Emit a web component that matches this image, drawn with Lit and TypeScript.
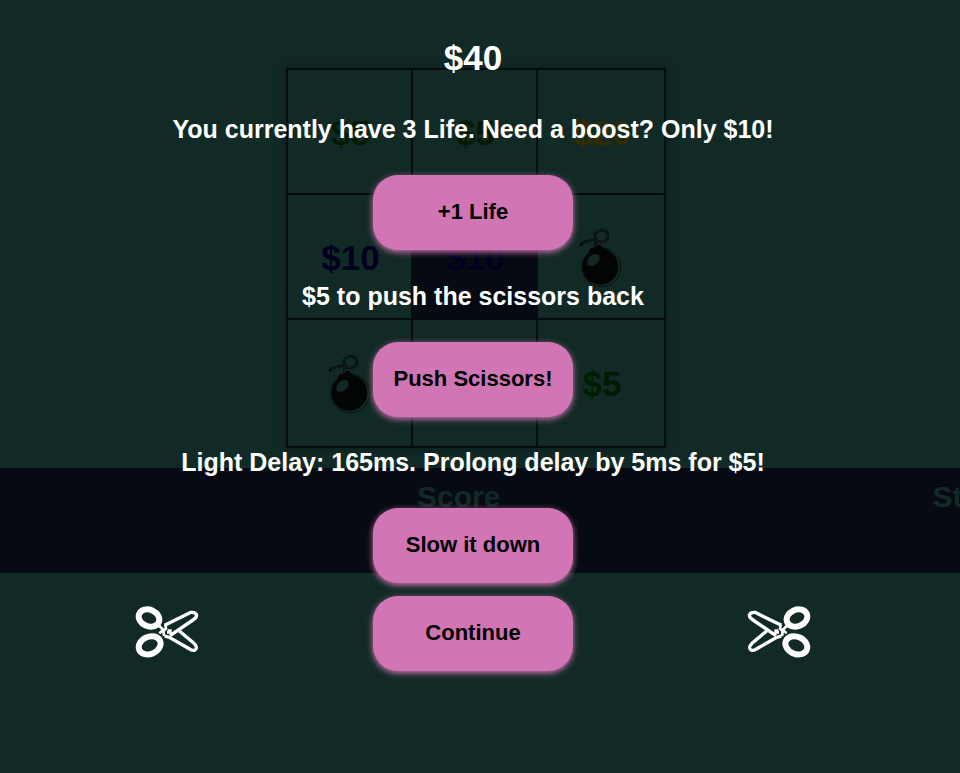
import { LitElement, html, css, svg } from "lit";
import { customElement, property } from "lit/decorators.js";

type Cell = { kind: string; label?: string; active?: boolean };

const CELLS: Cell[] = [
  { kind: "green", label: "$5" },
  { kind: "green", label: "$5" },
  { kind: "gold", label: "$20" },
  { kind: "blue", label: "$10" },
  { kind: "blue", label: "$10", active: true },
  { kind: "bomb" },
  { kind: "bomb" },
  { kind: "green", label: "$5" },
  { kind: "green", label: "$5" },
];

@customElement("bomb-icon")
class BombIcon extends LitElement {
  static styles = css`
    :host { display: block; width: 60px; height: 60px; }
    .icon { display: block; width: 60px; height: 60px; overflow: visible; }
  `;
  render() {
    return html`<svg class="icon" viewBox="273 143 180 180" fill="none" aria-label="Bomb">
      ${svg`
        <circle cx="361" cy="261" r="58" stroke="#07100e" stroke-width="3" />
        <circle cx="358" cy="259" r="54" fill="#030504" />
        <path d="M323 212 L330 204 L345 200 L350 193 L360 194 L362 200 L370 204 L368 216 L340 222 Z" fill="#030504" />
        <ellipse cx="337" cy="239" rx="22" ry="15" transform="rotate(-42 337 239)" fill="#122824" stroke="#07100e" stroke-width="2" />
        <path d="M301 193 C302 182 318 184 330 180 C344 174 352 189 366 184 C388 177 384 153 366 150 C350 148 335 163 344 172 C349 177 341 181 343 199" stroke="#07100e" stroke-width="8" />
        <path d="M301 190 C305 183 318 184 330 180 C344 174 352 189 366 184 C388 177 384 153 366 150 C350 148 335 163 344 172 C349 177 341 181 343 199" stroke="#11231f" stroke-width="3" stroke-dasharray="5 2" />
        <circle cx="300" cy="193" r="4" fill="#030504" />
      `}
    </svg>`;
  }
}

@customElement("scissors-icon")
class ScissorsIcon extends LitElement {
  @property({ type: Boolean, reflect: true }) flipped = false;
  static styles = css`
    :host { display: block; width: 64px; height: 64px; flex: none; }
    :host([flipped]) { transform: scaleX(-1); }
    .icon { display: block; width: 64px; height: 64px; }
  `;
  render() {
    return html`<svg class="icon" viewBox="45 36 192 192" fill="none" stroke="#fff" aria-label="Scissors">
      ${svg`
        <ellipse cx="87" cy="84" rx="32" ry="25" transform="rotate(24 87 84)" stroke-width="18" />
        <ellipse cx="89" cy="166" rx="34" ry="26" transform="rotate(-24 89 166)" stroke-width="18" />
        <path d="M134 106 L213 67 Q228 66 230 76 Q230 83 219 90 L150 137" stroke-width="10" stroke-linejoin="round" />
        <path d="M134 138 L148 142 L214 180 Q227 184 229 174 Q230 168 222 160 L178 123" stroke-width="10" stroke-linejoin="round" />
        <path d="M118 108 L130 120 L118 130 M136 104 L138 116 L130 124 L132 138" stroke-width="8" />
        <path d="M143 118 h12 v13 h-14 v-8 h2 Z" fill="#fff" stroke="none" />
      `}
    </svg>`;
  }
}

@customElement("app-root")
class AppRoot extends LitElement {
  static styles = css`
    :host {
      display: block;
      position: relative;
      min-height: 100vh;
      overflow: hidden;
      background: #122a26;
      font-family: "Liberation Sans", Arial, sans-serif;
      font-weight: bold;
    }
    .game { padding-top: 68px; }
    .board-row { display: flex; justify-content: center; padding-right: 8px; }
    .board {
      display: grid;
      grid-template-columns: 123px 123px 126px;
      grid-template-rows: 123px 123px 126px;
      gap: 2px;
      border: 2px solid #060a12;
      background: #060a12;
      box-shadow: 0 0 8px rgba(6, 10, 18, 0.5);
    }
    .cell {
      display: flex;
      align-items: center;
      justify-content: center;
      box-sizing: border-box;
      padding: 2px 0 0 2px;
      background: #122a26;
      font-size: 35px;
      line-height: 42px;
    }
    .active { background: #060a12; }
    .green { color: #011a02; }
    .gold { color: #332b00; }
    .blue { color: #00001f; }
    .stats {
      display: flex;
      gap: 432px;
      height: 105px;
      margin-top: 20px;
      padding: 12px 0 0 417px;
      box-sizing: border-box;
      overflow: hidden;
      white-space: nowrap;
      background: #060a12;
      color: #122a26;
      font-size: 30px;
      line-height: 34px;
    }
    .shop {
      position: absolute;
      inset: 0;
      display: flex;
      flex-direction: column;
      align-items: center;
      padding: 37px 14px 0 0;
      color: #fff;
      text-align: center;
    }
    .money { margin: 0 0 36px; font-size: 35px; line-height: 42px; }
    .offer { display: flex; flex-direction: column; align-items: center; margin-bottom: 32px; }
    .offer:nth-of-type(2) { margin-bottom: 31px; }
    .offer:last-of-type { margin-bottom: 13px; }
    .label { margin: 0 0 31px; font-size: 25px; line-height: 29px; }
    .button {
      width: 200px;
      height: 75px;
      flex: none;
      padding: 0 0 2px;
      border: 0;
      border-radius: 25px;
      background: #d175b5;
      box-shadow: 0 2px 6px #d175b5;
      color: #000;
      font: inherit;
      font-size: 22px;
      line-height: 26px;
      cursor: pointer;
    }
    .exit { display: flex; align-items: center; gap: 174px; }
  `;

  render() {
    const offers = [
      ["You currently have 3 Life. Need a boost? Only $10!", "+1 Life"],
      ["$5 to push the scissors back", "Push Scissors!"],
      ["Light Delay: 165ms. Prolong delay by 5ms for $5!", "Slow it down"],
    ];
    return html`
      <div class="game">
        <div class="board-row">
          <div class="board">
            ${CELLS.map(
              (c) => html`<div class="cell ${c.kind} ${c.active ? "active" : ""}">
                ${c.kind === "bomb" ? html`<bomb-icon></bomb-icon>` : c.label}
              </div>`
            )}
          </div>
        </div>
        <div class="stats"><span>Score</span><span>St</span></div>
      </div>
      <main class="shop">
        <h1 class="money">$40</h1>
        ${offers.map(
          ([text, action], i) => html`<section class="offer">
            <p class="label" id="offer-${i}">${text}</p>
            <button class="button" aria-describedby="offer-${i}">${action}</button>
          </section>`
        )}
        <div class="exit">
          <scissors-icon></scissors-icon>
          <button class="button">Continue</button>
          <scissors-icon flipped></scissors-icon>
        </div>
      </main>
    `;
  }
}
